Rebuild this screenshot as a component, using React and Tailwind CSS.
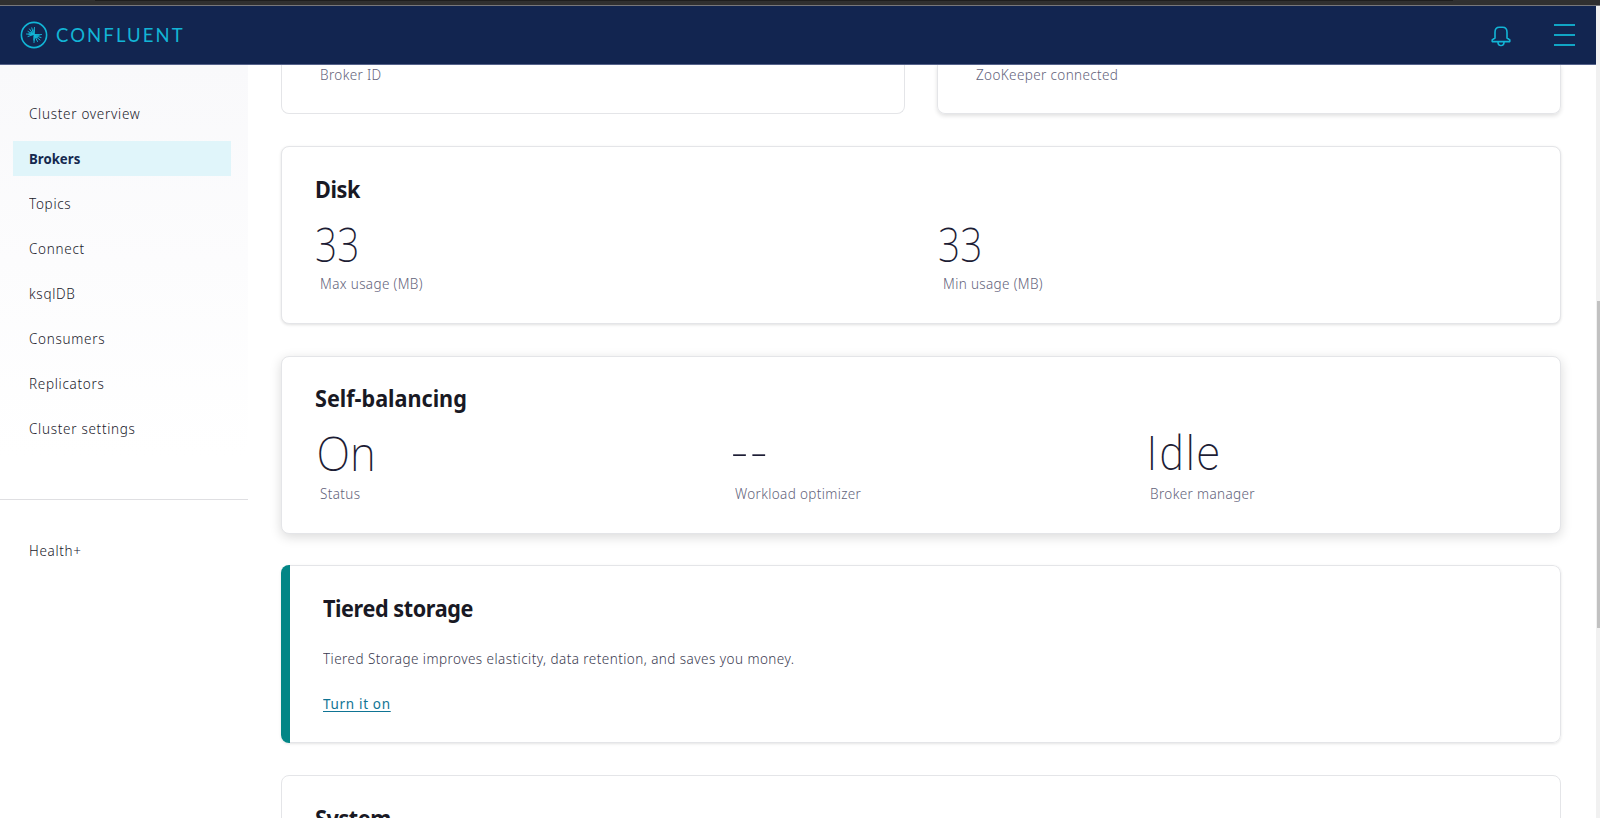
const navItems = [
  'Cluster overview',
  'Brokers',
  'Topics',
  'Connect',
  'ksqlDB',
  'Consumers',
  'Replicators',
  'Cluster settings',
];

const cardBase = 'h-[178px] shrink-0 rounded-[8px] border border-[#e4e5e8] bg-white';

function LogoMark() {
  return (
    <svg width="28" height="28" viewBox="0 0 28 28" fill="none" stroke="#12b5d6" strokeLinecap="round">
      <circle cx="14" cy="14" r="12.6" strokeWidth="1.6" />
      <g strokeWidth="1">
        <path d="M13.5 13.5L6.5 13M13.5 13.5L8 10.5M13.5 13.5L9.5 8M13.5 13.5L11.8 6.8M13.5 13.5L14.5 6.5M13.5 13.5L8 15.5" />
        <path d="M14.5 14.5L21.5 13.5M14.5 14.5L21 16.5M14.5 14.5L20 19M14.5 14.5L17.5 20.5M14.5 14.5L14 21.5" />
      </g>
      <path d="M11 11.5L17 16.5M14.2 9L14 19M9 13L19 14" strokeWidth="1.3" />
    </svg>
  );
}

function BellIcon() {
  return (
    <svg width="20" height="21" viewBox="0 0 20 21" fill="none" stroke="#12b5d6" strokeWidth="1.6" strokeLinejoin="round">
      <path d="M1.2 15.6V13.8L4 12V6.2C4 3 5.6 1.2 8.4 1.2H11.6C14.4 1.2 16 3 16 6.2V12L18.8 13.8V15.6Z" />
      <path d="M7 15.9C7 18.2 8.2 19.5 10 19.5S13 18.2 13 15.9" />
    </svg>
  );
}

function Title({ children, tracking = 'tracking-[-0.45px]' }) {
  return (
    <h2
      className={`origin-left scale-x-[0.9] whitespace-nowrap text-[24px] leading-[32px] font-bold text-[#191924] ${tracking}`}
    >
      {children}
    </h2>
  );
}

function Label({ children }) {
  return (
    <div className="origin-left scale-x-90 whitespace-nowrap text-[15px] leading-[24px] font-light tracking-[0.4px] text-[#62627a]">
      {children}
    </div>
  );
}

function Metric({ value, label, valueStyle }) {
  return (
    <div className="min-w-0 flex-1">
      <div className={`h-[56px] origin-left whitespace-nowrap text-[48px] leading-[56px] text-[#1d1d35] ${valueStyle}`}>
        {value}
      </div>
      <div className="-mt-px pl-[5px]">
        <Label>{label}</Label>
      </div>
    </div>
  );
}

export default function App() {
  return (
    <div className="flex h-[818px] w-[1600px] flex-col overflow-hidden bg-white font-['Noto_Sans',sans-serif]">
      <div className="flex h-[6px] shrink-0 border-b border-[#77777a] bg-[#303030]">
        <div className="ml-[95px] h-[1px] w-[1358px] bg-[#1e1e1e]" />
      </div>
      <div className="flex min-h-0 flex-1">
        <div className="flex w-[1596px] shrink-0 flex-col">
          <header className="flex h-[59px] shrink-0 items-center border-b border-[#55628a] bg-[#122550] pr-[21px] pl-[20px]">
            <LogoMark />
            <span className="ml-[8px] font-['Lato',sans-serif] text-[18.5px] leading-[24px] tracking-[2.1px] text-[#12b5d6]">
              CONFLUENT
            </span>
            <div className="ml-auto flex items-center gap-[43px]">
              <div className="pt-[2px]">
                <BellIcon />
              </div>
              <div className="flex w-[21px] flex-col gap-[8px]">
                <div className="h-[2px] bg-[#11a5c5]" />
                <div className="h-[2px] bg-[#11a5c5]" />
                <div className="h-[2px] bg-[#11a5c5]" />
              </div>
            </div>
          </header>

          <div className="flex min-h-0 flex-1">
            <aside className="flex w-[248px] shrink-0 flex-col">
              <nav className="flex h-[435px] flex-col border-b border-[#dfdfe2] bg-linear-to-b from-[#f9f9fb] to-white to-90% px-[13px] pt-[26px]">
                {navItems.map((item) => (
                  <a key={item} className="flex h-[45.1px] w-[218px] items-center">
                    <span
                      className={
                        item === 'Brokers'
                          ? 'flex h-[35px] w-full items-center bg-[#e0f5fa] pb-[2px] pl-[16px]'
                          : 'flex h-[35px] w-full items-center pb-[2px] pl-[16px]'
                      }
                    >
                      <span
                        className={
                          item === 'Brokers'
                            ? 'origin-left scale-x-[0.88] whitespace-nowrap text-[15px] leading-[24px] font-bold text-[#15294f]'
                            : 'origin-left scale-x-90 whitespace-nowrap text-[15px] leading-[24px] font-light tracking-[0.78px] text-[#20202a]'
                        }
                      >
                        {item}
                      </span>
                    </span>
                  </a>
                ))}
              </nav>
              <a className="mt-[38px] flex h-[24px] items-center pl-[29px]">
                <span className="origin-left scale-x-90 text-[15px] leading-[24px] font-light tracking-[0.75px] text-[#20202a]">
                  Health+
                </span>
              </a>
            </aside>

            <main className="flex min-h-0 flex-1 flex-col gap-[31.7px] overflow-hidden pr-[35px] pl-[33px]">
              <div className="flex h-[49.3px] shrink-0 gap-[32px]">
                <div className="flex-1 rounded-b-[8px] border border-t-0 border-[#e4e5e8] pl-[38px]">
                  <div className="-mt-[3px]">
                    <Label>Broker ID</Label>
                  </div>
                </div>
                <div className="flex-1 rounded-b-[8px] border border-t-0 border-[#e4e5e8] pl-[38px] shadow-[0_2px_4px_rgba(0,0,0,0.12)]">
                  <div className="-mt-[3px]">
                    <Label>ZooKeeper connected</Label>
                  </div>
                </div>
              </div>

              <section className={`${cardBase} pt-[26px] pl-[33px] shadow-[0_1px_3px_rgba(0,0,0,0.12)]`}>
                <Title>Disk</Title>
                <div className="mt-[11px] flex">
                  <Metric value="33" label="Max usage (MB)" valueStyle="font-extralight scale-x-[0.81]" />
                  <Metric value="33" label="Min usage (MB)" valueStyle="font-extralight scale-x-[0.81]" />
                </div>
              </section>

              <section className={`${cardBase} pt-[25px] pl-[33px] shadow-[0_3px_12px_rgba(0,0,0,0.15)]`}>
                <Title tracking="tracking-[0px]">Self-balancing</Title>
                <div className="mt-[12px] flex">
                  <Metric value="On" label="Status" valueStyle="-mt-px mb-px pl-[1.5px] font-extralight scale-x-[0.92]" />
                  <Metric
                    value="--"
                    label="Workload optimizer"
                    valueStyle="-mt-[4px] mb-[4px] pl-[1px] font-extralight tracking-[2px] scale-x-[1.1]"
                  />
                  <Metric
                    value="Idle"
                    label="Broker manager"
                    valueStyle="pl-px font-['Roboto',sans-serif] font-extralight tracking-[1.8px] scale-x-[0.93]"
                  />
                </div>
              </section>

              <section className="flex h-[178px] shrink-0 overflow-hidden rounded-[8px] bg-white shadow-[0_1px_3px_rgba(0,0,0,0.11)]">
                <div className="w-[9px] bg-[#038686]" />
                <div className="flex-1 rounded-r-[8px] border border-l-0 border-[#e4e5e8] px-[33px] pt-[26px]">
                  <Title>Tiered storage</Title>
                  <p className="mt-[22px] origin-left scale-x-90 text-[15px] leading-[24px] font-light tracking-[0.5px] text-[#3a3a50]">
                    <span className="whitespace-nowrap">
                      Tiered Storage improves elasticity, data retention, and saves you money.
                    </span>
                  </p>
                  <a className="mt-[21px] block w-fit origin-left scale-x-90 text-[15px] leading-[24px] tracking-[0.75px] text-[#0f7494] underline underline-offset-[2px]">
                    Turn it on
                  </a>
                </div>
              </section>

              <section className={`${cardBase} pt-[26px] pl-[33px]`}>
                <Title>System</Title>
              </section>
            </main>
          </div>
        </div>
        <div className="flex w-[4px] shrink-0 flex-col bg-[#f1f1f1] pt-[295px] pl-[1px]">
          <div className="h-[327px] bg-[#c1c1c1]" />
        </div>
      </div>
    </div>
  );
}
